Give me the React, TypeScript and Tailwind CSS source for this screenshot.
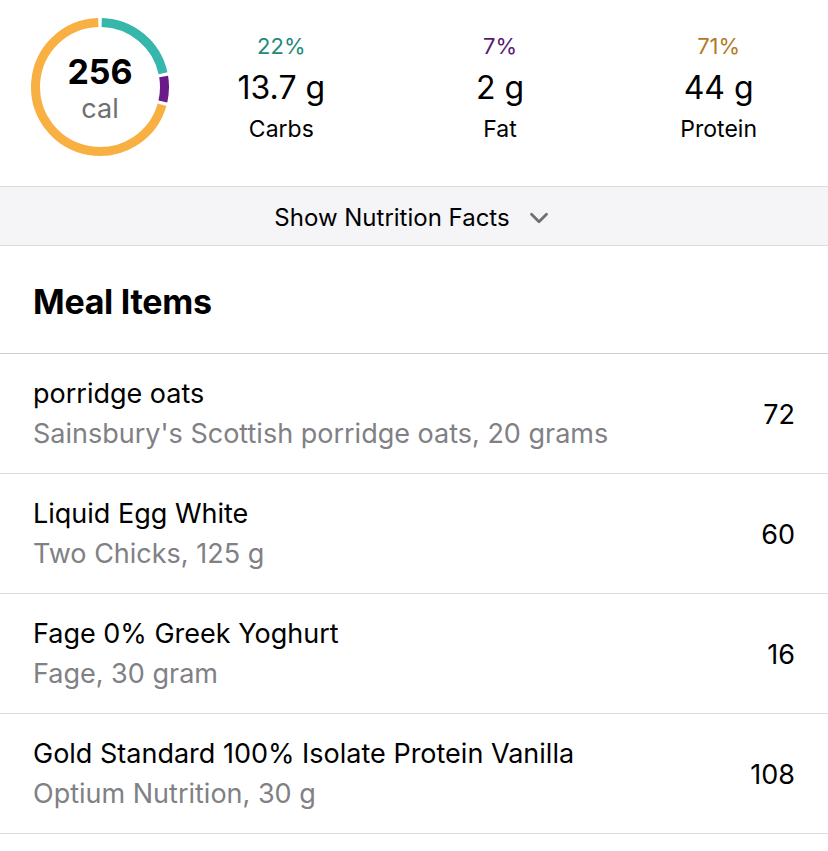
import { ChevronDown } from 'lucide-react';

const macros = [
  { pct: 22, grams: '13.7 g', label: 'Carbs', ring: '#36b7ab', text: 'text-[#1f8a7c]' },
  { pct: 7, grams: '2 g', label: 'Fat', ring: '#6b1a8a', text: 'text-[#5a1a72]' },
  { pct: 71, grams: '44 g', label: 'Protein', ring: '#f8b043', text: 'text-[#b57a24]' },
];

const items = [
  { name: 'porridge oats', detail: "Sainsbury's Scottish porridge oats, 20 grams", cal: 72 },
  { name: 'Liquid Egg White', detail: 'Two Chicks, 125 g', cal: 60 },
  { name: 'Fage 0% Greek Yoghurt', detail: 'Fage, 30 gram', cal: 16 },
  { name: 'Gold Standard 100% Isolate Protein Vanilla', detail: 'Optium Nutrition, 30 g', cal: 108 },
];

function arc(cx: number, cy: number, r: number, a0: number, a1: number) {
  const p = (a: number) => {
    const rad = ((a - 90) * Math.PI) / 180;
    return [cx + r * Math.cos(rad), cy + r * Math.sin(rad)];
  };
  const [x0, y0] = p(a0);
  const [x1, y1] = p(a1);
  const large = a1 - a0 > 180 ? 1 : 0;
  return `M ${x0} ${y0} A ${r} ${r} 0 ${large} 1 ${x1} ${y1}`;
}

function Ring() {
  const gap = 3;
  let start = 0;
  const segs = macros.map((m) => {
    const sweep = (m.pct / 100) * 360;
    const s = { d: arc(70, 70, 64.5, start + gap / 2, start + sweep - gap / 2), color: m.ring };
    start += sweep;
    return s;
  });
  return (
    <div className="relative w-[140px] h-[140px] shrink-0 mt-[17px]">
      <svg width="140" height="140" viewBox="0 0 140 140" className="absolute inset-0">
        {segs.map((s, i) => (
          <path key={i} d={s.d} fill="none" stroke={s.color} strokeWidth={9} />
        ))}
      </svg>
      <div className="absolute inset-0 flex flex-col items-center justify-center pt-[4px]">
        <span className="text-[34px] leading-[38px] font-bold text-black">256</span>
        <span className="text-[27px] leading-[34px] text-[#6e6e73] mt-[1px]">cal</span>
      </div>
    </div>
  );
}

export default function App() {
  return (
    <div className="w-[828px] h-[851px] bg-white overflow-hidden font-['Inter',sans-serif] text-black">
      <div className="h-[187px] flex items-start pl-[30px] border-b border-[#dcdcdc]">
        <Ring />
        <div className="flex-1 grid grid-cols-3 mt-[32px] pl-[2px]">
          {macros.map((m) => (
            <div key={m.label} className="flex flex-col items-center">
              <span className={`text-[22px] leading-[28px] ${m.text}`}>{m.pct}%</span>
              <span className="text-[32px] leading-[40px] mt-[8px]">{m.grams}</span>
              <span className="text-[23px] leading-[28px] mt-[7px]">{m.label}</span>
            </div>
          ))}
        </div>
      </div>

      <div className="h-[59px] bg-[#f5f5f7] border-b border-[#dcdcdc] flex items-center justify-center gap-[14px] pt-[3px]">
        <span className="text-[24px]">Show Nutrition Facts</span>
        <ChevronDown size={30} strokeWidth={2.25} className="text-[#6e6e73]" />
      </div>

      <div className="h-[108px] flex items-center px-[33px] border-b border-[#cfcfcf]">
        <h2 className="text-[34px] font-bold tracking-[-0.3px] mt-[4px]">Meal Items</h2>
      </div>

      {items.map((it) => (
        <div key={it.name} className="h-[120px] flex items-center justify-between px-[33px] border-b border-[#dcdcdc]">
          <div className="flex flex-col gap-[6px]">
            <span className="text-[27px] leading-[34px]">{it.name}</span>
            <span className="text-[27px] leading-[34px] text-[#808085]">{it.detail}</span>
          </div>
          <span className="text-[27px] mt-[4px]">{it.cal}</span>
        </div>
      ))}
    </div>
  );
}
